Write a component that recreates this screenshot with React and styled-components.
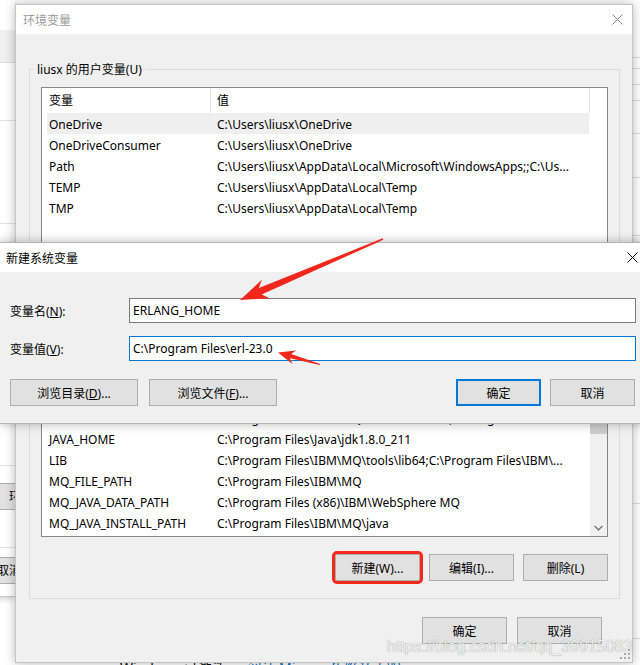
import React from 'react'
import styled, { createGlobalStyle } from 'styled-components'

const GlobalStyle = createGlobalStyle`
  html, body {
    margin: 0;
    padding: 0;
  }
  body {
    font-family: "Noto Sans", "Noto Sans CJK SC", sans-serif;
    font-size: 12px;
    color: #000;
  }
`

// data
const userVars = [
  { name: 'OneDrive', value: 'C:\\Users\\liusx\\OneDrive', selected: true },
  { name: 'OneDriveConsumer', value: 'C:\\Users\\liusx\\OneDrive' },
  { name: 'Path', value: 'C:\\Users\\liusx\\AppData\\Local\\Microsoft\\WindowsApps;;C:\\Us...' },
  { name: 'TEMP', value: 'C:\\Users\\liusx\\AppData\\Local\\Temp' },
  { name: 'TMP', value: 'C:\\Users\\liusx\\AppData\\Local\\Temp' }
]

const systemVars = [
  { name: 'ComSpec', value: 'C:\\WINDOWS\\system32\\cmd.exe' },
  { name: 'DriverData', value: 'C:\\Windows\\System32\\Drivers\\DriverData' },
  { name: 'INCLUDE', value: 'C:\\Program Files\\IBM\\MQ\\tools\\c\\include;C:\\Program Files\\IBM\\...' },
  { name: 'JAVA_HOME', value: 'C:\\Program Files\\Java\\jdk1.8.0_211' },
  { name: 'LIB', value: 'C:\\Program Files\\IBM\\MQ\\tools\\lib64;C:\\Program Files\\IBM\\...' },
  { name: 'MQ_FILE_PATH', value: 'C:\\Program Files\\IBM\\MQ' },
  { name: 'MQ_JAVA_DATA_PATH', value: 'C:\\Program Files (x86)\\IBM\\WebSphere MQ' },
  { name: 'MQ_JAVA_INSTALL_PATH', value: 'C:\\Program Files\\IBM\\MQ\\java' }
]

const rightStripLines = [57, 68, 84, 100, 133, 177, 235, 503, 638]

// desktop + background fragments
const Desktop = styled.div`
  position: relative;
  width: 640px;
  height: 665px;
  overflow: hidden;
  background: #fff;
`

const BackWindow = styled.div`
  position: absolute;
  left: -185px;
  top: 0;
  width: 200px;
  height: 597px;
  box-sizing: border-box;
  background: #fff;
  border-bottom: 1px solid #c9c9c9;
  box-shadow: 0 2px 6px rgba(0, 0, 0, 0.18);
  display: flex;
  flex-direction: column;
  overflow: hidden;
`

const TabBand = styled.div`
  margin-top: 30px;
  height: 32px;
  flex: none;
  background: #f0f0f0;
  border-bottom: 1px solid #dadada;
`

const Rule = styled.div`
  flex: none;
  margin-top: ${p => p.$gap}px;
  height: 1px;
  background: ${p => p.$color || '#e3e3e3'};
`

const BackButton = styled.div`
  flex: none;
  align-self: flex-start;
  box-sizing: border-box;
  margin-top: ${p => p.$gap}px;
  margin-left: ${p => p.$left}px;
  width: 120px;
  height: 27px;
  padding-left: ${p => p.$pad}px;
  line-height: 25px;
  white-space: nowrap;
  background: #e1e1e1;
  border: 1px solid #adadad;
`

const RightStrip = styled.div`
  position: absolute;
  left: 628px;
  top: 0;
  width: 20px;
  height: 665px;
  background: #fff;
  display: flex;
  flex-direction: column;
`

const BottomNote = styled.div`
  position: absolute;
  left: 120px;
  top: 657px;
  font-size: 14px;
  white-space: nowrap;
  color: #000;

  a {
    color: #0066b4;
    text-decoration: none;
    margin-left: 8px;
  }
`

// windows
const Window = styled.div`
  position: absolute;
  left: ${p => p.$left}px;
  top: ${p => p.$top}px;
  width: ${p => p.$width}px;
  height: ${p => p.$height}px;
  box-sizing: border-box;
  border: 1px solid ${p => p.$border};
  background: #f0f0f0;
  box-shadow: 0 0 10px rgba(0, 0, 0, 0.28);
  display: flex;
  flex-direction: column;
`

const TitleBar = styled.div`
  flex: none;
  height: 29px;
  background: #fff;
  display: flex;
  align-items: center;
  padding-left: ${p => p.$pad}px;
  color: ${p => (p.$inactive ? '#9b9b9b' : '#000')};
`

const TitleText = styled.span`
  flex: 1;
  font-size: 12px;
`

const CloseIcon = styled.svg`
  flex: none;
  width: 11px;
  height: 11px;
  margin-right: ${p => p.$gap}px;
`

const Close = ({ gap, color }) => (
  <CloseIcon $gap={gap} viewBox='0 0 11 11'>
    <path d='M0.5 0.5 L10.5 10.5 M10.5 0.5 L0.5 10.5' stroke={color} strokeWidth='1' fill='none' />
  </CloseIcon>
)

const WindowBody = styled.div`
  flex: 1;
  display: flex;
  flex-direction: column;
  padding: 0 12px 0 13px;
`

const GroupBox = styled.div`
  flex: none;
  display: flex;
  flex-direction: column;
  margin-top: ${p => p.$gap}px;
  padding: 0 11px 17px;
  border: 1px solid #dcdcdc;
`

const Legend = styled.div`
  align-self: flex-start;
  margin: -8px 0 0 -7px;
  padding: 0 3px;
  line-height: 16px;
  background: #f0f0f0;
`

const ListBox = styled.div`
  flex: none;
  box-sizing: border-box;
  margin-top: 9px;
  height: ${p => p.$height}px;
  border: 1px solid #828790;
  background: #fff;
  display: flex;
  overflow: hidden;
`

const ListColumn = styled.div`
  flex: 1;
  min-width: 0;
  display: flex;
  flex-direction: column;
`

const HeaderRow = styled.div`
  flex: none;
  display: flex;
  height: 25px;
`

const HeaderCell = styled.div`
  box-sizing: border-box;
  width: ${p => p.$width}px;
  padding: 1px 0 0 ${p => p.$pad}px;
  border-right: 1px solid #e5e5e5;
  line-height: 24px;
`

const Row = styled.div`
  flex: none;
  display: flex;
  margin-left: 5px;
  width: 542px;
  height: 19px;
  padding-top: 2px;
  line-height: 20px;
  background: ${p => (p.$selected ? '#efefef' : 'transparent')};
`

const Cell = styled.div`
  box-sizing: border-box;
  flex: ${p => (p.$grow ? 1 : 'none')};
  width: ${p => (p.$grow ? 'auto' : '163px')};
  min-width: 0;
  padding-left: ${p => p.$pad}px;
  white-space: nowrap;
  overflow: hidden;
`

const ScrollTrack = styled.div`
  flex: none;
  width: 17px;
  background: ${p => (p.$empty ? '#fff' : '#f0f0f0')};
  display: flex;
  flex-direction: column;
`

const ScrollArrow = styled.div`
  flex: none;
  height: 17px;
  display: flex;
  align-items: center;
  justify-content: center;
`

const ScrollThumb = styled.div`
  flex: none;
  height: 77px;
  background: #cdcdcd;
`

const Filler = styled.div`
  flex: 1;
`

const ButtonRow = styled.div`
  flex: none;
  display: flex;
  justify-content: ${p => (p.$start ? 'flex-start' : 'flex-end')};
  gap: ${p => p.$gap}px;
  margin-top: ${p => p.$top}px;
  margin-right: ${p => p.$right || 0}px;
`

const Button = styled.button`
  flex: none;
  box-sizing: border-box;
  width: ${p => p.$width || 85}px;
  height: 27px;
  margin: 0;
  padding: 0;
  font: inherit;
  color: #000;
  background: #e1e1e1;
  border: ${p => (p.$primary ? '2px solid #0078d7' : '1px solid #adadad')};
  border-radius: ${p => (p.$marked ? '2px' : '0')};
  outline: ${p => (p.$marked ? '3px solid #f2291b' : 'none')};
`

const Grip = styled.svg`
  position: absolute;
  right: 2px;
  bottom: 3px;
  width: 10px;
  height: 10px;
`

// dialog
const DialogBody = styled.div`
  flex: 1;
  display: flex;
  flex-direction: column;
  padding: 26px 19px 0 10px;
`

const FieldRow = styled.div`
  flex: none;
  display: flex;
  align-items: center;
  height: 25px;
  margin-top: ${p => p.$gap || 0}px;
`

const FieldLabel = styled.label`
  flex: none;
  width: 119px;

  u {
    text-decoration: underline;
  }
`

const TextInput = styled.input`
  flex: 1;
  min-width: 0;
  box-sizing: border-box;
  height: 25px;
  margin: 0;
  padding: 0 3px;
  font: inherit;
  font-size: 12px;
  color: #000;
  background: #fff;
  border: 1px solid ${p => (p.$focused ? '#0078d7' : '#7a7a7a')};
  outline: none;
`

const Spacer = styled.div`
  flex: 1;
`

// overlays
const Watermark = styled.div`
  position: absolute;
  left: 387px;
  top: 638px;
  font-family: "Liberation Sans", sans-serif;
  font-size: 16px;
  color: rgba(255, 255, 255, 0.9);
  text-shadow: 0 0 1px rgba(0, 0, 0, 0.5);
  white-space: nowrap;
`

const ArrowLayer = styled.svg`
  position: absolute;
  left: 0;
  top: 0;
  width: 640px;
  height: 665px;
  pointer-events: none;
`

const VarList = ({ height, vars, scroll }) => (
  <ListBox $height={height}>
    <ListColumn>
      <HeaderRow>
        <HeaderCell $width={169} $pad={7}>变量</HeaderCell>
        <HeaderCell $width={379} $pad={6}>值</HeaderCell>
      </HeaderRow>
      {vars.map(v => (
        <Row key={v.name} $selected={v.selected}>
          <Cell $pad={2}>{v.name}</Cell>
          <Cell $grow $pad={7}>{v.value}</Cell>
        </Row>
      ))}
    </ListColumn>
    {scroll
      ? (
        <ScrollTrack>
          <ScrollArrow />
          <ScrollThumb />
          <Filler />
          <ScrollArrow>
            <svg width='9' height='6' viewBox='0 0 9 6'>
              <path d='M0.5 0.8 L4.5 4.8 L8.5 0.8' stroke='#606060' strokeWidth='1.2' fill='none' />
            </svg>
          </ScrollArrow>
        </ScrollTrack>
        )
      : <ScrollTrack $empty />}
  </ListBox>
)

const App = () => {
  return (
    <Desktop>
      <GlobalStyle />

      <BackWindow>
        <TabBand />
        <Rule $gap={57} />
        <Rule $gap={102} />
        <Rule $gap={241} />
        <BackButton $gap={17} $left={184} $pad={9}>环境变量(N)...</BackButton>
        <Rule $gap={37} />
        <BackButton $gap={9} $left={175} $pad={6}>取消</BackButton>
      </BackWindow>

      <RightStrip>
        {rightStripLines.map((y, i) => (
          <Rule key={y} $gap={i === 0 ? y : y - rightStripLines[i - 1] - 1} $color='#dedede' />
        ))}
      </RightStrip>

      <BottomNote>
        Windows 已激活。<a href='#privacy'>阅读 Microsoft 隐私声明</a>
      </BottomNote>

      <Window $left={15} $top={4} $width={618} $height={659} $border='#c4c4c4'>
        <TitleBar $pad={7} $inactive>
          <TitleText>环境变量</TitleText>
          <Close gap={9} color='#8a8a8a' />
        </TitleBar>
        <WindowBody>
          <GroupBox $gap={35}>
            <Legend>liusx 的用户变量(U)</Legend>
            <VarList height={160} vars={userVars} />
            <ButtonRow $gap={9} $top={17}>
              <Button>新建(N)...</Button>
              <Button>编辑(E)...</Button>
              <Button>删除(D)</Button>
            </ButtonRow>
          </GroupBox>

          <GroupBox $gap={12}>
            <Legend>系统变量(S)</Legend>
            <VarList height={198} vars={systemVars} scroll />
            <ButtonRow $gap={9} $top={17}>
              <Button $marked>新建(W)...</Button>
              <Button>编辑(I)...</Button>
              <Button>删除(L)</Button>
            </ButtonRow>
          </GroupBox>

          <ButtonRow $gap={10} $top={18} $right={18}>
            <Button>确定</Button>
            <Button>取消</Button>
          </ButtonRow>
        </WindowBody>
        <Grip viewBox='0 0 10 10'>
          <g fill='#a8a8a8'>
            <rect x='8' y='0' width='2' height='2' />
            <rect x='4' y='4' width='2' height='2' />
            <rect x='8' y='4' width='2' height='2' />
            <rect x='0' y='8' width='2' height='2' />
            <rect x='4' y='8' width='2' height='2' />
            <rect x='8' y='8' width='2' height='2' />
          </g>
        </Grip>
      </Window>

      <Window $left={-1} $top={242} $width={657} $height={182} $border='#b5b5b5'>
        <TitleBar $pad={6}>
          <TitleText>新建系统变量</TitleText>
          <Close gap={17} color='#000' />
        </TitleBar>
        <DialogBody>
          <FieldRow>
            <FieldLabel>变量名(<u>N</u>):</FieldLabel>
            <TextInput readOnly defaultValue='ERLANG_HOME' />
          </FieldRow>
          <FieldRow $gap={13}>
            <FieldLabel>变量值(<u>V</u>):</FieldLabel>
            <TextInput $focused readOnly defaultValue='C:\Program Files\erl-23.0' />
          </FieldRow>
          <ButtonRow $start $gap={11} $top={18}>
            <Button $width={128}>浏览目录(<u>D</u>)...</Button>
            <Button $width={128}>浏览文件(<u>F</u>)...</Button>
            <Spacer />
            <ButtonRow $gap={9} $top={0} $right={1}>
              <Button $primary>确定</Button>
              <Button>取消</Button>
            </ButtonRow>
          </ButtonRow>
        </DialogBody>
      </Window>

      <Watermark>https://blog.csdn.net/qq_39915083</Watermark>

      <ArrowLayer viewBox='0 0 640 665'>
        <polygon
          fill='#f2271b'
          points='240,300 269.7,298.2 261.6,294.6 383.3,239.7 382.7,238.3 258.9,288.1 261.8,279.8'
        />
        <polygon
          fill='#f2271b'
          points='278,352.5 292.4,363.9 289.9,358.3 319.8,365.1 320.2,363.9 291.1,353.9 296.2,350.5'
        />
      </ArrowLayer>
    </Desktop>
  )
}

export default App
